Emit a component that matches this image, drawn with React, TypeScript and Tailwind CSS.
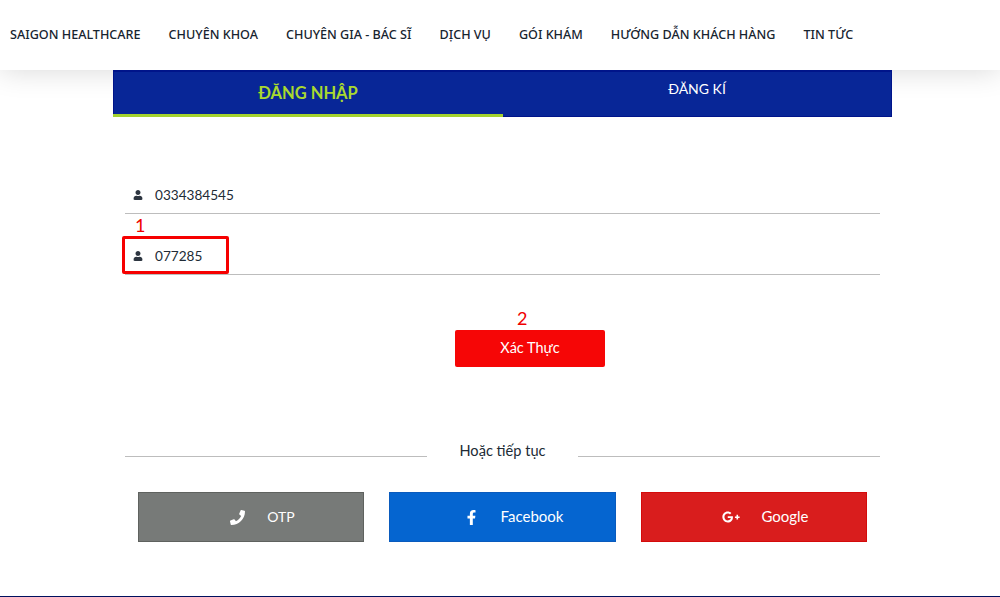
import React from 'react';
import { FaUser, FaPhone, FaFacebookF, FaGooglePlusG } from 'react-icons/fa';

const navItems = [
  'SAIGON HEALTHCARE',
  'CHUYÊN KHOA',
  'CHUYÊN GIA - BÁC SĨ',
  'DỊCH VỤ',
  'GÓI KHÁM',
  'HƯỚNG DẪN KHÁCH HÀNG',
  'TIN TỨC',
];

const App: React.FC = () => {
  return (
    <div className="relative h-[597px] overflow-hidden bg-white font-['Lato','Noto_Sans',sans-serif] text-[13.6px] text-[#212b36]">
      <header className="relative z-10 h-[70px] bg-white shadow-[0_0_30px_rgba(0,0,0,0.16)]">
        <nav className="flex items-center gap-[28px] pl-[10px] pt-[25px] font-['Noto_Sans',sans-serif] text-[12.6px] font-medium leading-[20px] text-[#17242f]">
          {navItems.map((item) => (
            <a key={item} className="whitespace-nowrap">{item}</a>
          ))}
        </nav>
      </header>

      <main className="relative z-20 ml-[113px] w-[779px]">
        <div className="flex h-[47px] border border-t-2 border-[#00148a] bg-[#082697]">
          <div className="-mb-px -ml-px flex w-[390px] justify-center border-b-[3px] border-[#a4d22e] pt-[9px] text-[16.5px] font-bold text-[#a9d92f]">
            ĐĂNG NHẬP
          </div>
          <div className="flex-1 pt-[6px] text-center text-[14px] text-white">ĐĂNG KÍ</div>
        </div>

        <form className="px-[12px]">
          <div className="mt-[61px] flex h-[36px] items-center border-b border-[#bdbdbd] pb-[2px] pl-[8px]">
            <FaUser className="h-[10px] w-[10px] text-[#2d3540]" />
            <span className="ml-[12px] mt-[2px]">0334384545</span>
          </div>
          <div className="mt-[25px] flex h-[36px] items-center border-b border-[#bdbdbd] pb-[2px] pl-[8px]">
            <FaUser className="h-[10px] w-[10px] text-[#2d3540]" />
            <span className="ml-[12px] mt-[2px]">077285</span>
          </div>

          <div className="mt-[55px] pl-[330px]">
            <button type="button" className="h-[37px] w-[150px] rounded-[2px] bg-[#f60606] pb-[2px] text-[14.5px] text-white">
              Xác Thực
            </button>
          </div>

          <div className="mt-[72px] flex h-[23px] items-center">
            <div className="mt-[11px] h-px flex-1 bg-[#bdbdbd]" />
            <span className="w-[151px] text-center text-[14.6px]">Hoặc tiếp tục</span>
            <div className="mt-[11px] h-px flex-1 bg-[#bdbdbd]" />
          </div>

          <div className="mt-[30px] flex gap-[25px] pl-[13px] text-[15px] text-white">
            <button type="button" className="flex h-[50px] w-[226px] items-center justify-center gap-[22px] border border-[#5f625f] bg-[#777a78] pl-[23px] text-[14px]">
              <FaPhone className="h-[15px] w-[15px]" />
              <span className="-mt-[2px]">OTP</span>
            </button>
            <button type="button" className="flex h-[50px] w-[227px] items-center justify-center gap-[22px] border border-[#0a5bbd] bg-[#0565d0] pl-[22px]">
              <FaFacebookF className="h-[15px] w-[15px]" />
              <span className="-mt-[2px]">Facebook</span>
            </button>
            <button type="button" className="flex h-[50px] w-[226px] items-center justify-center gap-[21px] border border-[#d40b0b] bg-[#d91d1d] pl-[23px]">
              <FaGooglePlusG className="h-[18px] w-[18px]" />
              <span className="-mt-[2px]">Google</span>
            </button>
          </div>
        </form>
      </main>

      {/* annotations drawn over the screenshot */}
      <div className="absolute left-[122px] top-[236px] z-30 h-[38px] w-[107px] rounded-[2px] border-[3px] border-[#f60000]" />
      <span className="absolute left-[135px] top-[214px] z-30 text-[18px] leading-[22px] text-[#f00000]">1</span>
      <span className="absolute left-[517px] top-[307px] z-30 text-[18px] leading-[22px] text-[#f00000]">2</span>

      <div className="absolute bottom-0 left-0 h-px w-full bg-[#00105e]" />
    </div>
  );
};

export default App;
